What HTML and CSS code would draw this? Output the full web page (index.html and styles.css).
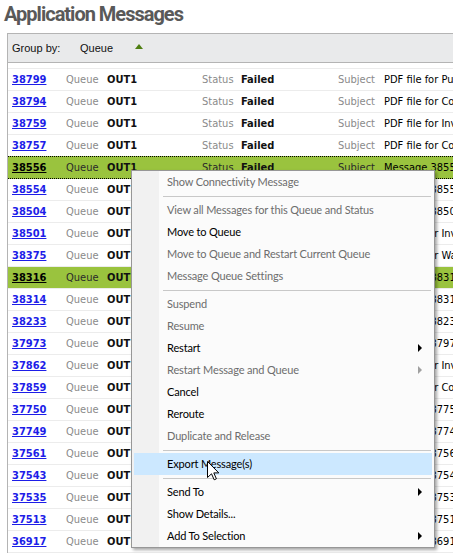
FILE: index.html
```html
<!DOCTYPE html>
<html lang="en">
<head>
    <meta charset="UTF-8">
    <title>Application Messages</title>
    <link rel="stylesheet" href="styles.css">
</head>
<body>

<h1 class="page-title">Application Messages</h1>

<div class="grid-panel">
    <div class="group-bar">
        <span class="group-label">Group by:</span>
        <span class="group-field">Queue</span>
        <span class="sort-up"></span>
    </div>

    <div class="rows">
        <div class="msg-row"><a class="msg-id" href="#">38799</a><span class="lbl">Queue</span><b>OUT1</b><span class="lbl">Status</span><b>Failed</b><span class="lbl">Subject</span><span class="subj">PDF file for Purchase Order</span></div>
        <div class="msg-row"><a class="msg-id" href="#">38794</a><span class="lbl">Queue</span><b>OUT1</b><span class="lbl">Status</span><b>Failed</b><span class="lbl">Subject</span><span class="subj">PDF file for Confirmation</span></div>
        <div class="msg-row"><a class="msg-id" href="#">38759</a><span class="lbl">Queue</span><b>OUT1</b><span class="lbl">Status</span><b>Failed</b><span class="lbl">Subject</span><span class="subj">PDF file for Invoice</span></div>
        <div class="msg-row"><a class="msg-id" href="#">38757</a><span class="lbl">Queue</span><b>OUT1</b><span class="lbl">Status</span><b>Failed</b><span class="lbl">Subject</span><span class="subj">PDF file for Confirmation</span></div>
        <div class="msg-row selected focused"><a class="msg-id" href="#">38556</a><span class="lbl">Queue</span><b>OUT1</b><span class="lbl">Status</span><b>Failed</b><span class="lbl">Subject</span><span class="subj">Message 38556</span></div>
        <div class="msg-row"><a class="msg-id" href="#">38554</a><span class="lbl">Queue</span><b>OUT1</b><span class="lbl">Status</span><b>Failed</b><span class="lbl">Subject</span><span class="subj">Message 38554</span></div>
        <div class="msg-row"><a class="msg-id" href="#">38504</a><span class="lbl">Queue</span><b>OUT1</b><span class="lbl">Status</span><b>Failed</b><span class="lbl">Subject</span><span class="subj">Message 38504</span></div>
        <div class="msg-row"><a class="msg-id" href="#">38501</a><span class="lbl">Queue</span><b>OUT1</b><span class="lbl">Status</span><b>Failed</b><span class="lbl">Subject</span><span class="subj">PDF file for Invoice</span></div>
        <div class="msg-row"><a class="msg-id" href="#">38375</a><span class="lbl">Queue</span><b>OUT1</b><span class="lbl">Status</span><b>Failed</b><span class="lbl">Subject</span><span class="subj">PDF file for Warehouse</span></div>
        <div class="msg-row selected"><a class="msg-id" href="#">38316</a><span class="lbl">Queue</span><b>OUT1</b><span class="lbl">Status</span><b>Failed</b><span class="lbl">Subject</span><span class="subj">Message 38316</span></div>
        <div class="msg-row"><a class="msg-id" href="#">38314</a><span class="lbl">Queue</span><b>OUT1</b><span class="lbl">Status</span><b>Failed</b><span class="lbl">Subject</span><span class="subj">Message 38314</span></div>
        <div class="msg-row"><a class="msg-id" href="#">38233</a><span class="lbl">Queue</span><b>OUT1</b><span class="lbl">Status</span><b>Failed</b><span class="lbl">Subject</span><span class="subj">Message 38233</span></div>
        <div class="msg-row"><a class="msg-id" href="#">37973</a><span class="lbl">Queue</span><b>OUT1</b><span class="lbl">Status</span><b>Failed</b><span class="lbl">Subject</span><span class="subj">Message 37973</span></div>
        <div class="msg-row"><a class="msg-id" href="#">37862</a><span class="lbl">Queue</span><b>OUT1</b><span class="lbl">Status</span><b>Failed</b><span class="lbl">Subject</span><span class="subj">PDF file for Invoice</span></div>
        <div class="msg-row"><a class="msg-id" href="#">37859</a><span class="lbl">Queue</span><b>OUT1</b><span class="lbl">Status</span><b>Failed</b><span class="lbl">Subject</span><span class="subj">PDF file for Confirmation</span></div>
        <div class="msg-row"><a class="msg-id" href="#">37750</a><span class="lbl">Queue</span><b>OUT1</b><span class="lbl">Status</span><b>Failed</b><span class="lbl">Subject</span><span class="subj">Message 37750</span></div>
        <div class="msg-row"><a class="msg-id" href="#">37749</a><span class="lbl">Queue</span><b>OUT1</b><span class="lbl">Status</span><b>Failed</b><span class="lbl">Subject</span><span class="subj">Message 37749</span></div>
        <div class="msg-row"><a class="msg-id" href="#">37561</a><span class="lbl">Queue</span><b>OUT1</b><span class="lbl">Status</span><b>Failed</b><span class="lbl">Subject</span><span class="subj">Message 37561</span></div>
        <div class="msg-row"><a class="msg-id" href="#">37543</a><span class="lbl">Queue</span><b>OUT1</b><span class="lbl">Status</span><b>Failed</b><span class="lbl">Subject</span><span class="subj">Message 37543</span></div>
        <div class="msg-row"><a class="msg-id" href="#">37535</a><span class="lbl">Queue</span><b>OUT1</b><span class="lbl">Status</span><b>Failed</b><span class="lbl">Subject</span><span class="subj">Message 37535</span></div>
        <div class="msg-row"><a class="msg-id" href="#">37513</a><span class="lbl">Queue</span><b>OUT1</b><span class="lbl">Status</span><b>Failed</b><span class="lbl">Subject</span><span class="subj">Message 37513</span></div>
        <div class="msg-row"><a class="msg-id" href="#">36917</a><span class="lbl">Queue</span><b>OUT1</b><span class="lbl">Status</span><b>Failed</b><span class="lbl">Subject</span><span class="subj">Message 36917</span></div>
    </div>
</div>

<!-- menu contextual abierto sobre la fila seleccionada -->
<div class="context-menu">
    <div class="item disabled">Show Connectivity Message</div>
    <div class="sep"></div>
    <div class="item disabled">View all Messages for this Queue and Status</div>
    <div class="item">Move to Queue</div>
    <div class="item disabled">Move to Queue and Restart Current Queue</div>
    <div class="item disabled">Message Queue Settings</div>
    <div class="sep"></div>
    <div class="item disabled">Suspend</div>
    <div class="item disabled">Resume</div>
    <div class="item sub">Restart</div>
    <div class="item sub disabled">Restart Message and Queue</div>
    <div class="item">Cancel</div>
    <div class="item">Reroute</div>
    <div class="item disabled">Duplicate and Release</div>
    <div class="sep"></div>
    <div class="item hover">Export Message(s)</div>
    <div class="sep"></div>
    <div class="item sub">Send To</div>
    <div class="item">Show Details...</div>
    <div class="item sub">Add To Selection</div>
</div>

<svg class="cursor" width="13" height="20" viewBox="0 0 13 20">
    <path d="M0.5 0.5 L0.5 16.5 L4.5 12.8 L7.2 18.8 L9.4 17.8 L6.8 11.9 L11.8 11.9 Z" fill="#fff" stroke="#000" stroke-width="1" stroke-linejoin="miter"/>
</svg>

</body>
</html>
```

FILE: styles.css
```css
body {
    margin: 0;
    padding: 0;
    background-color: #fff;
    font-family: "DejaVu Sans Condensed", "DejaVu Sans", sans-serif;
    font-stretch: condensed;
    font-size: 11px;
    width: 453px;
    height: 554px;
    overflow: hidden;
    position: relative;
}

.page-title {
    margin: 0;
    padding: 2px 0 0 4px;
    height: 31px;
    box-sizing: border-box;
    font-family: Roboto, "Liberation Sans", sans-serif;
    font-stretch: normal;
    font-size: 20px;
    letter-spacing: -1px;
    line-height: 24px;
    font-weight: bold;
    color: #595959;
}

.grid-panel {
    margin-left: 7px;
    border-left: 1px solid #b4b4b4;
}

.group-bar {
    height: 30px;
    box-sizing: border-box;
    margin-top: 2px;
    border-top: 1px solid #b4b4b4;
    border-bottom: 1px solid #b4b4b4;
    background-color: #e9eaeb;
    display: flex;
    align-items: center;
    padding-left: 4px;
    font-family: "Liberation Sans", Arial, sans-serif;
    font-stretch: normal;
    font-size: 11px;
    color: #111;
}

.group-label {
    width: 68px;
}

.group-field {
    width: 55px;
}

.sort-up {
    width: 0;
    height: 0;
    border-left: 4px solid transparent;
    border-right: 4px solid transparent;
    border-bottom: 5px solid #4f7f12;
    margin-top: -3px;
}

.rows {
    margin-top: 5px;
    border-top: 1px solid #ececec;
}

.msg-row {
    display: grid;
    grid-template-columns: 54px 41px 95px 39px 97px 46px 1fr;
    align-items: center;
    height: 22px;
    box-sizing: border-box;
    padding-left: 4px;
    border-bottom: 1px solid #ececec;
    white-space: nowrap;
    overflow: hidden;
    color: #000;
}

.msg-row b {
    font-weight: bold;
    color: #111;
}

.msg-id {
    font-weight: bold;
    color: #1d1de8;
    text-decoration: underline;
}

.lbl {
    color: #8a8a8a;
}

.subj {
    overflow: hidden;
}

.msg-row.selected {
    background-color: #9ac33e;
}

.msg-row.selected .msg-id {
    color: #000;
}

.msg-row.selected .lbl {
    color: #2a2a2a;
}

.msg-row.focused {
    border-top: 1px dotted #000;
    border-bottom: 1px dotted #000;
    margin-top: -1px;
    height: 23px;
}

.context-menu {
    position: absolute;
    left: 131px;
    top: 170px;
    width: 304px;
    box-sizing: border-box;
    padding: 0 2px;
    border: 1px solid #979797;
    background: linear-gradient(to right, #f1f1f1 0, #f1f1f1 27px, #fbfbfb 27px);
    box-shadow: 2px 2px 3px rgba(0, 0, 0, 0.35);
    font-family: Lato, "Noto Sans", sans-serif;
    font-stretch: normal;
    font-size: 11px;
    letter-spacing: -0.15px;
    color: #000;
}

.context-menu .item {
    height: 22px;
    line-height: 22px;
    padding-left: 33px;
    padding-right: 10px;
    display: flex;
    justify-content: space-between;
    align-items: center;
}

.context-menu .item.disabled {
    color: #6d6d6d;
}

.context-menu .item.hover {
    background-color: #cce8ff;
}

.context-menu .item.sub::after {
    content: "";
    width: 0;
    height: 0;
    border-top: 4px solid transparent;
    border-bottom: 4px solid transparent;
    border-left: 4px solid #000;
}

.context-menu .item.sub.disabled::after {
    border-left-color: #a0a0a0;
}

.context-menu .sep {
    height: 6px;
    margin-left: 29px;
    margin-right: 1px;
    background: linear-gradient(#c8c8c8, #c8c8c8) center / 100% 1px no-repeat;
}

.cursor {
    position: absolute;
    left: 207px;
    top: 461px;
}
```
